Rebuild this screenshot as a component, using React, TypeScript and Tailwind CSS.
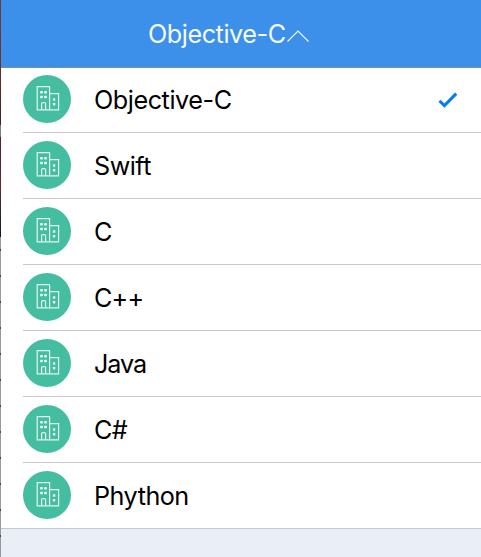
const languages = [
  { name: 'Objective-C', tracking: 'tracking-[-0.45px]' },
  { name: 'Swift', tracking: 'tracking-[-0.5px]' },
  { name: 'C', tracking: 'tracking-[-0.4px]' },
  { name: 'C++', tracking: 'tracking-[-0.8px]' },
  { name: 'Java', tracking: 'tracking-[-1.1px]' },
  { name: 'C#', tracking: 'tracking-[-0.6px]' },
  { name: 'Phython', tracking: 'tracking-[-0.5px]' },
];

function BuildingIcon() {
  return (
    <svg className="size-12 shrink-0" viewBox="0 0 48 48" fill="none">
      <circle cx="24" cy="24" r="24" fill="#44bda0" />
      <g stroke="#e0f5ef" strokeWidth="1.2">
        <path d="M14.2 34.8V11.6H26.6V34.8H14.2Z" />
        <path d="M26.6 18.6H35.6V34.8H26.6" />
        <path d="M18.6 34.8V28.4L19.4 27.6H21.8L22.6 28.4V34.8" />
      </g>
      <g fill="#eefaf7">
        <rect x="17.2" y="16" width="2.6" height="2.4" rx="0.4" />
        <rect x="21.2" y="16" width="2.6" height="2.4" rx="0.4" />
        <rect x="17.2" y="20.8" width="2.6" height="2.4" rx="0.4" />
        <rect x="21.2" y="20.8" width="2.6" height="2.4" rx="0.4" />
        <rect x="29.9" y="23.3" width="2.4" height="2.4" rx="0.4" />
        <rect x="29.9" y="28.1" width="2.4" height="2.4" rx="0.4" />
      </g>
    </svg>
  );
}

function LanguageRow({ name, tracking, selected, last }: { name: string; tracking: string; selected: boolean; last: boolean }) {
  return (
    <li className={`flex h-[66px] ${last ? 'border-b border-[#c8c7cc] pl-[22px]' : 'ml-[22px]'}`}>
      <div className={`flex flex-1 items-start pt-2 ${last ? '' : 'border-b border-[#c8c7cc]'}`}>
        <BuildingIcon />
        <span className={`ml-[23px] flex-1 text-[25.2px] leading-[50px] text-black ${tracking}`}>{name}</span>
        {selected && (
          <svg className="mr-[23.5px] mt-4 h-[18px] w-5" viewBox="0 0 20 18" fill="none">
            <path d="M1.5 9.8L6.4 14.6L18.2 2.6" stroke="#007aff" strokeWidth="3" />
          </svg>
        )}
      </div>
    </li>
  );
}

export default function App() {
  return (
    <div className="flex h-[557px] w-[481px] overflow-hidden bg-[#eaeef6] font-['Inter',sans-serif]">
      <div className="flex w-px shrink-0 flex-col">
        <div className="h-[125px] bg-linear-to-b from-[#64433c] via-[#70302c] to-[#452023]" />
        <div className="h-[12px] bg-[#777c85]" />
        <div className="h-[100px] bg-linear-to-b from-[#53202a] via-[#612b2d] to-[#071529]" />
        <div className="flex-1 bg-[repeating-linear-gradient(to_bottom,#999_0px,#999_12px,#444_12px,#444_14px,#999_14px,#999_26px)]" />
      </div>
      <div className="flex min-w-0 flex-1 flex-col">
        <header className="relative flex h-[68px] shrink-0 items-center border-b border-[#708fae] bg-[#3c90e9] pl-[147px] text-[#f4f9fe]">
          <span className="text-[25.2px] leading-8 tracking-[-0.45px]">Objective-C</span>
          <svg className="mt-1 h-3 w-6" viewBox="0 0 24 12" fill="none">
            <path d="M1.5 11.5L12 1L22.5 11.5" stroke="currentColor" strokeWidth="1.1" />
          </svg>
        </header>
        <ul className="-mt-px bg-white">
          {languages.map(({ name, tracking }, index) => (
            <LanguageRow
              key={name}
              name={name}
              tracking={tracking}
              selected={index === 0}
              last={index === languages.length - 1}
            />
          ))}
        </ul>
      </div>
    </div>
  );
}
